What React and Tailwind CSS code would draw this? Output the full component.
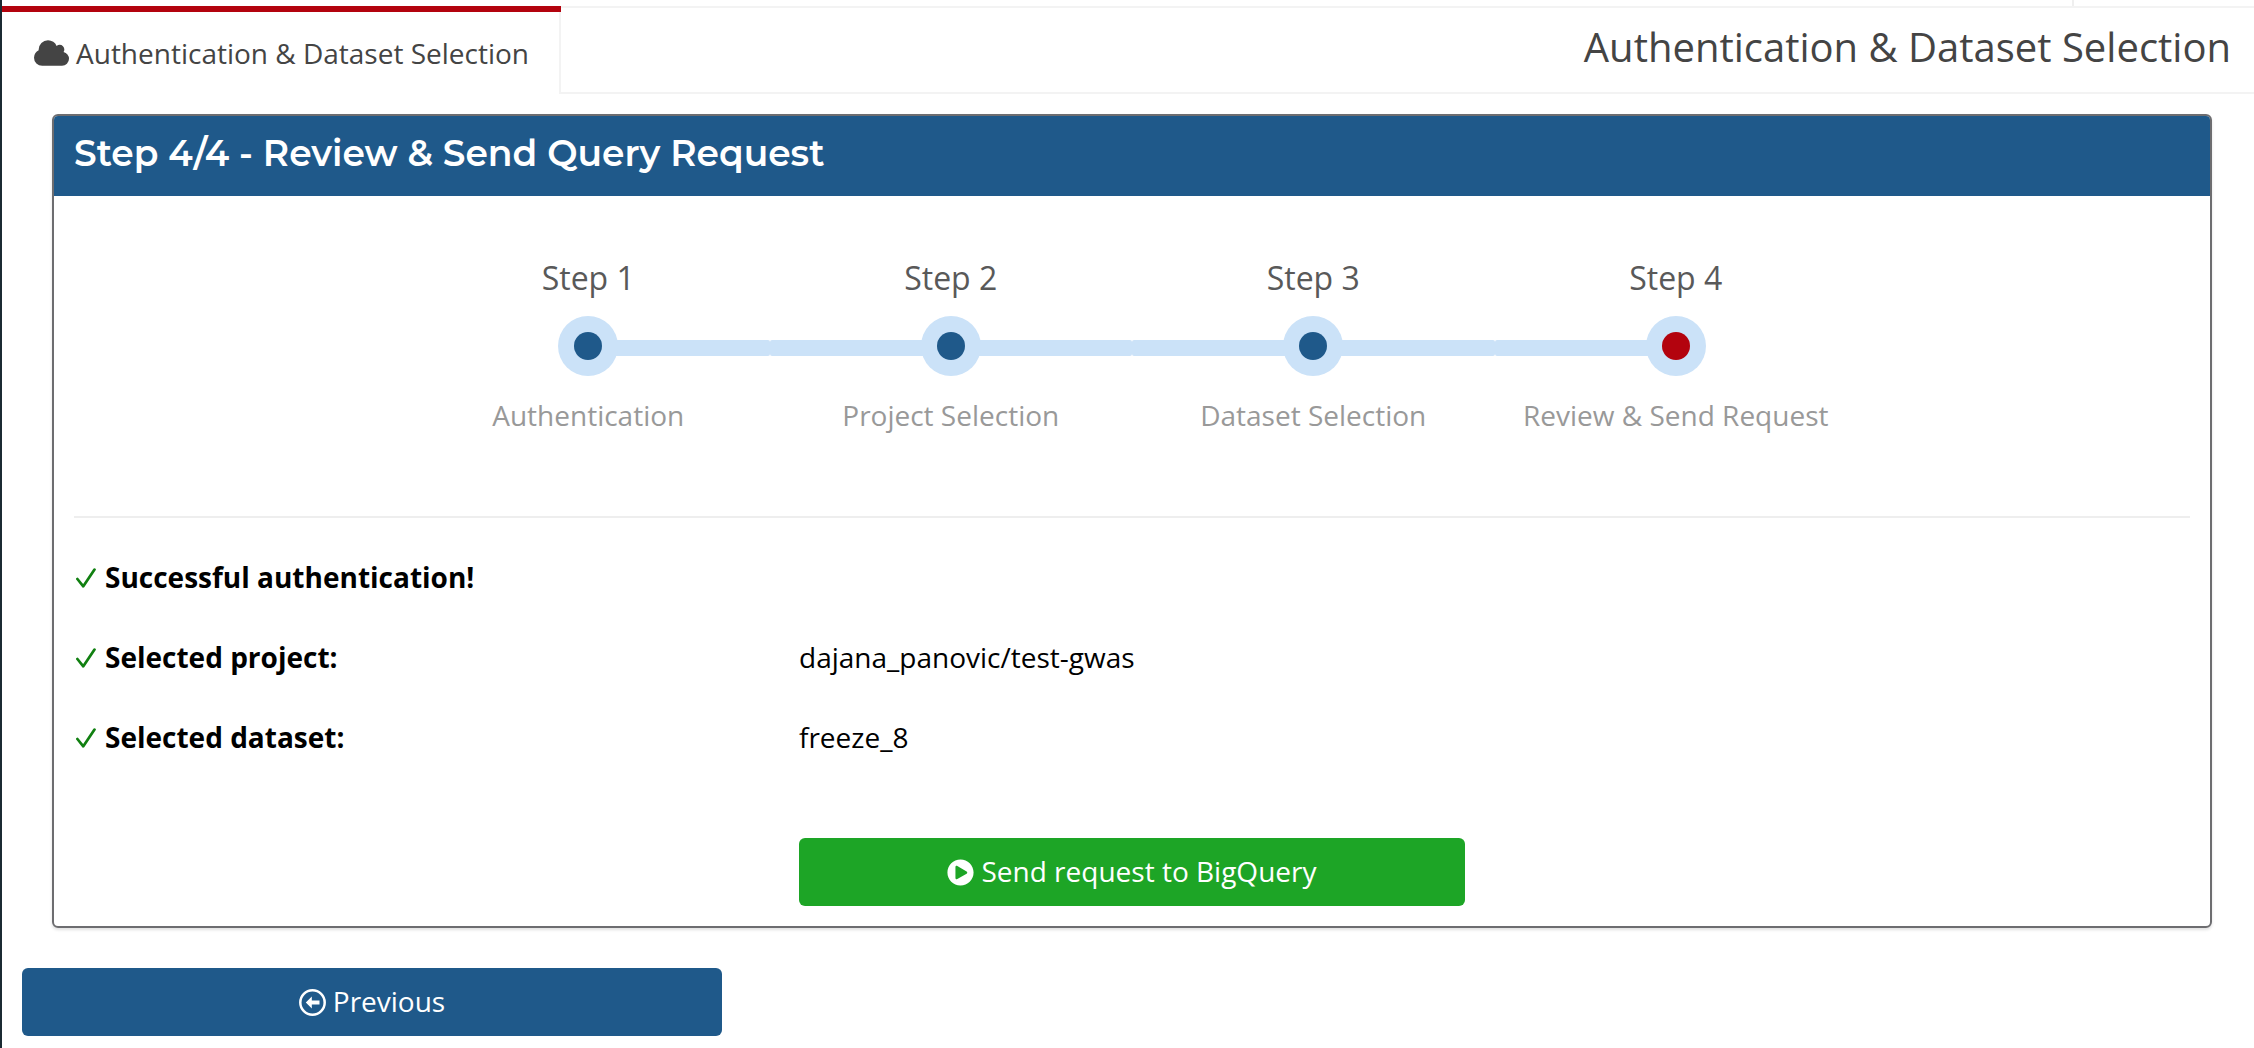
import React from "react";
import { FaPlayCircle } from "react-icons/fa";

const steps = [
  { title: "Step 1", caption: "Authentication", dot: "bg-[#1f598a]", line: "left-1/2 right-0" },
  { title: "Step 2", caption: "Project Selection", dot: "bg-[#1f598a]", line: "left-0 right-0" },
  { title: "Step 3", caption: "Dataset Selection", dot: "bg-[#1f598a]", line: "left-0 right-0" },
  { title: "Step 4", caption: "Review & Send Request", dot: "bg-[#b3030e]", line: "left-0 right-1/2" },
];

const results = [
  { label: "Successful authentication!", value: "" },
  { label: "Selected project:", value: "dajana_panovic/test-gwas" },
  { label: "Selected dataset:", value: "freeze_8" },
];

function CloudIcon() {
  return (
    <svg viewBox="0 0 1920 1408" className="h-[26px] w-[35px] shrink-0" fill="currentColor">
      <path d="M1920 1024q0 159-112.500 271.500t-271.500 112.500h-1088q-185 0-316.500-131.500t-131.500-316.500q0-132 71-241.500t187-163.500q-2-28-2-43 0-212 150-362t362-150q158 0 286.500 88t187.500 230q70-62 166-62 106 0 181 75t75 181q0 75-41 138 129 30 213 134.500t84 239.500z" />
    </svg>
  );
}

function CheckIcon() {
  return (
    <svg viewBox="0 0 20 20" className="h-5 w-5 shrink-0" fill="none" stroke="#118011" strokeWidth="2.7" strokeLinecap="round" strokeLinejoin="round">
      <path d="M1.400 11 7.300 18.300 18.500 1.600" />
    </svg>
  );
}

function ArrowLeftCircleIcon() {
  return (
    <svg viewBox="0 0 27 27" className="h-[27px] w-[27px] shrink-0">
      <circle cx="13.500" cy="13.500" r="12.200" fill="none" stroke="currentColor" strokeWidth="2.500" />
      <path d="M6.800 13.500 12.800 7.500V11.600H20.500V15.400H12.800V19.500Z" fill="currentColor" />
    </svg>
  );
}

function Stepper() {
  return (
    <div className="mx-auto flex w-[1450px] pt-[59px]">
      {steps.map((s) => (
        <div key={s.title} className="flex flex-1 flex-col items-center">
          <div className="h-[46px] text-[32px] leading-[46px] text-[#595959]">{s.title}</div>
          <div className="relative mt-[15px] flex h-[60px] w-full items-center justify-center">
            <div className={"absolute top-6 h-4 rounded-[2px] bg-[#cbe2f8] " + s.line} />
            <div className="relative flex h-[60px] w-[60px] items-center justify-center rounded-full bg-[#cbe2f8]">
              <div className={"h-7 w-7 rounded-full " + s.dot} />
            </div>
          </div>
          <div className="mt-[19px] text-[28px] leading-10 whitespace-nowrap text-[#999]">{s.caption}</div>
        </div>
      ))}
    </div>
  );
}

export default function App() {
  return (
    <div className="flex h-[1048px] w-[2254px] overflow-hidden bg-white font-['Open_Sans',sans-serif] text-[28px] leading-10 text-black">
      <div className="w-[2px] shrink-0 bg-[#1b2a32]" />
      <div className="flex min-w-0 flex-1 flex-col">
        <div className="flex h-[6px] shrink-0 justify-end">
          <div className="w-[182px] border-l-2 border-[#efefef]" />
        </div>
        <header className="flex h-[88px] shrink-0 text-[#444]">
          <div className="flex w-[559px] flex-col">
            <div className="h-[6px] bg-[#b3030e]" />
            <div className="flex flex-1 items-center gap-[7px] border-r-2 border-[#f3f3f3] pl-8">
              <CloudIcon />
              <span className="whitespace-nowrap">Authentication &amp; Dataset Selection</span>
            </div>
          </div>
          <div className="flex flex-1 justify-end border-y-2 border-[#f3f3f3] pt-[11px] pr-[23px]">
            <h1 className="text-[40px] leading-[56px] whitespace-nowrap">Authentication &amp; Dataset Selection</h1>
          </div>
        </header>

        <section className="mt-5 mr-[42px] ml-[50px] h-[814px] shrink-0 overflow-hidden rounded-[6px] border-2 border-[#6d6d70] shadow-[0_2px_3px_rgba(0,0,0,0.12)]">
          <div className="h-20 bg-[#1f598a] pt-3 pl-5">
            <h2 className="text-[36px] leading-[50px] font-semibold whitespace-nowrap text-white font-['Montserrat','Inter',sans-serif]">
              Step 4/4 - Review &amp; Send Query Request
            </h2>
          </div>
          <Stepper />
          <div className="mx-5 mt-[81px] h-[2px] bg-[#eee]" />
          <div className="mt-10 flex flex-col gap-10 px-5">
            {results.map((r) => (
              <div key={r.label} className="flex h-10 items-center">
                <div className="flex w-[725px] items-center gap-[9px] pl-[2px]">
                  <CheckIcon />
                  <span className="-mt-[2px] font-bold">{r.label}</span>
                </div>
                <span className="-mt-[2px]">{r.value}</span>
              </div>
            ))}
          </div>
          <button className="mt-20 ml-[745px] flex h-[68px] w-[666px] items-center justify-center gap-[7px] rounded-[6px] bg-[#1da526] text-white">
            <FaPlayCircle className="h-[27px] w-[27px]" />
            <span className="-mt-[2px]">Send request to BigQuery</span>
          </button>
        </section>

        <button className="mt-10 ml-5 flex h-[68px] w-[700px] shrink-0 items-center justify-center gap-[7px] rounded-[6px] bg-[#1f598a] text-white">
          <ArrowLeftCircleIcon />
          <span className="-mt-[2px]">Previous</span>
        </button>
      </div>
    </div>
  );
}
